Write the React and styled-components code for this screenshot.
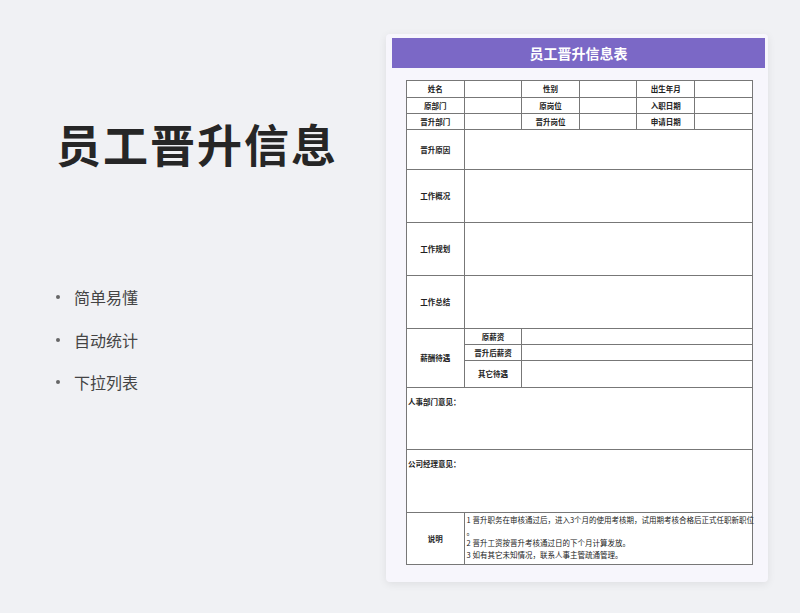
import React from 'react';
import styled, { createGlobalStyle } from 'styled-components';

const Global = createGlobalStyle`
  html, body { margin: 0; padding: 0; }
  body { background: #f0f1f4; font-family: "Noto Sans CJK SC", "Noto Sans", sans-serif; }
`;

const Page = styled.div`
  width: 800px;
  height: 613px;
  display: flex;
  box-sizing: border-box;
  padding-top: 34px;
`;

const Left = styled.div`
  width: 386px;
  padding-left: 56px;
  box-sizing: border-box;
`;

const Title = styled.h1`
  margin: 82px 0 0;
  font-size: 45px;
  font-weight: 700;
  color: #262626;
  letter-spacing: 2px;
  line-height: 56px;
`;

const List = styled.ul`
  list-style: none;
  margin: 104px 0 0;
  padding: 0;
`;

const Item = styled.li`
  font-size: 16px;
  color: #444;
  height: 42.5px;
  display: flex;
  align-items: center;
  gap: 14px;
  &::before {
    content: '';
    width: 4px;
    height: 4px;
    border-radius: 50%;
    background: #666;
  }
`;

const Card = styled.div`
  width: 382px;
  height: 548px;
  background: #f7f6fc;
  border-radius: 4px;
  box-shadow: 0 2px 8px rgba(0,0,0,0.08);
  padding: 4px 3px 0 6px;
  box-sizing: border-box;
`;

const Header = styled.div`
  height: 30px;
  background: #7b68c6;
  color: #fff;
  font-size: 14px;
  font-weight: 700;
  display: flex;
  align-items: center;
  justify-content: center;
`;

const Sheet = styled.table`
  margin: 12px 0 0 14px;
  width: 346px;
  border-collapse: collapse;
  table-layout: fixed;
  background: #fff;
  font-size: 7.5px;
  color: #222;
  td { border: 1px solid #777; padding: 0; box-sizing: border-box; }
`;

const Cell = styled.td`
  height: ${p => p.h}px;
  font-weight: ${p => (p.bold ? 700 : 400)};
  text-align: ${p => p.align || 'center'};
  vertical-align: ${p => p.valign || 'middle'};
  padding: ${p => p.pad || '0'} !important;
  line-height: 1.55;
`;

const Note = styled.div`
  white-space: nowrap;
`;

export default function App() {
  const w = <col style={{ width: '57.6px' }} />;
  return (
    <Page>
      <Global />
      <Left>
        <Title>员工晋升信息</Title>
        <List>
          <Item>简单易懂</Item>
          <Item>自动统计</Item>
          <Item>下拉列表</Item>
        </List>
      </Left>
      <Card>
        <Header>员工晋升信息表</Header>
        <Sheet>
          <colgroup>{w}{w}{w}{w}{w}{w}</colgroup>
          <tbody>
            <tr><Cell h={17} bold>姓名</Cell><Cell /><Cell bold>性别</Cell><Cell /><Cell bold>出生年月</Cell><Cell /></tr>
            <tr><Cell h={16} bold>原部门</Cell><Cell /><Cell bold>原岗位</Cell><Cell /><Cell bold>入职日期</Cell><Cell /></tr>
            <tr><Cell h={16} bold>晋升部门</Cell><Cell /><Cell bold>晋升岗位</Cell><Cell /><Cell bold>申请日期</Cell><Cell /></tr>
            <tr><Cell h={40} bold>晋升原因</Cell><Cell colSpan={5} /></tr>
            <tr><Cell h={53} bold>工作概况</Cell><Cell colSpan={5} /></tr>
            <tr><Cell h={53} bold>工作规划</Cell><Cell colSpan={5} /></tr>
            <tr><Cell h={53} bold>工作总结</Cell><Cell colSpan={5} /></tr>
            <tr><Cell rowSpan={3} bold>薪酬待遇</Cell><Cell h={16} bold>原薪资</Cell><Cell colSpan={4} /></tr>
            <tr><Cell h={16} bold>晋升后薪资</Cell><Cell colSpan={4} /></tr>
            <tr><Cell h={27} bold>其它待遇</Cell><Cell colSpan={4} /></tr>
            <tr><Cell h={62} colSpan={6} bold align="left" valign="top" pad="8px 0 0 1px">人事部门意见：</Cell></tr>
            <tr><Cell h={63} colSpan={6} bold align="left" valign="top" pad="8px 0 0 1px">公司经理意见：</Cell></tr>
            <tr>
              <Cell h={52} bold>说明</Cell>
              <Cell colSpan={5} align="left" valign="top" pad="1px 0 0 2px">
                <Note>1 晋升职务在审核通过后，进入3个月的使用考核期，试用期考核合格后正式任职新职位</Note>
                <Note>。</Note>
                <Note>2 晋升工资按晋升考核通过日的下个月计算发放。</Note>
                <Note>3 如有其它未知情况，联系人事主管疏通管理。</Note>
              </Cell>
            </tr>
          </tbody>
        </Sheet>
      </Card>
    </Page>
  );
}
